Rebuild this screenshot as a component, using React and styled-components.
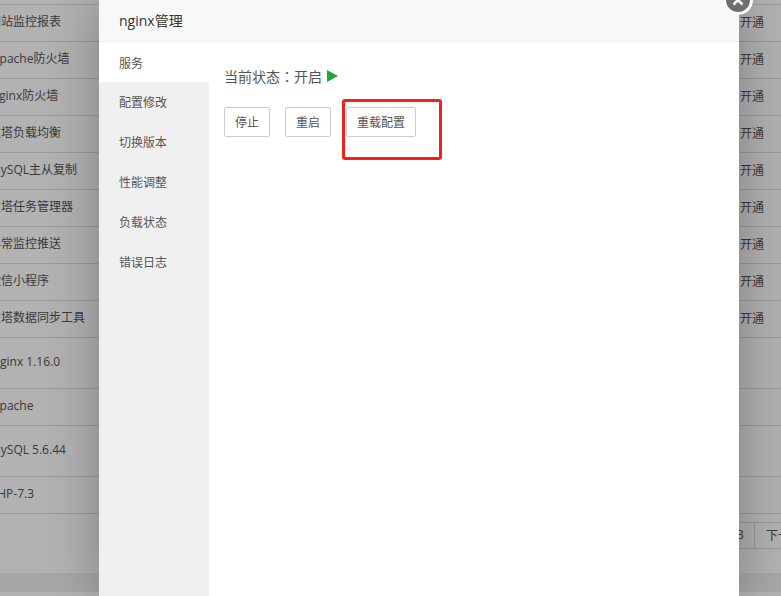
import React from "react";
import styled, { createGlobalStyle } from "styled-components";

const Global = createGlobalStyle`
  html, body { margin: 0; padding: 0; height: 100%; overflow: hidden; }
  body { font-family: "Open Sans", "Noto Sans CJK SC", sans-serif; font-size: 12px; color: #555; }
`;

const Page = styled.div`
  position: relative;
  width: 781px;
  height: 596px;
  overflow: hidden;
  background: #fff;
`;

const Table = styled.div`
  display: flex;
  flex-direction: column;
  padding-top: 4px;
`;

const Row = styled.div`
  display: flex;
  align-items: center;
  justify-content: space-between;
  height: ${(p) => p.$h}px;
  border-top: 1px solid #ddd;
  box-sizing: border-box;
  padding: 0 17px 4px 0;
  color: #555;
  font-size: 12px;
`;

const RowName = styled.span`
  margin-left: ${(p) => p.$shift}px;
  white-space: nowrap;
`;

const Action = styled.span`
  color: #555;
  padding-top: 2px;
`;

const TableEnd = styled.div`
  border-top: 1px solid #ddd;
`;

const Pager = styled.div`
  display: flex;
  justify-content: flex-end;
  height: 27px;
  margin: 8px -32px 0 0;
  font-size: 12px;
`;

const PageCell = styled.span`
  display: flex;
  align-items: center;
  padding: 0 ${(p) => p.$pad}px 2px;
  border: 1px solid #ddd;
  border-width: 1px 0 1px ${(p) => (p.$line ? "1px" : "0")};
  white-space: nowrap;
`;

const Footer = styled.div`
  height: 19px;
  margin-top: 24px;
  background: #efefef;
`;

const Shade = styled.div`
  position: absolute;
  inset: 0;
  background: #000;
  opacity: 0.3;
`;

const Modal = styled.div`
  position: absolute;
  left: 99px;
  top: 0;
  width: 640px;
  height: 596px;
  display: flex;
  flex-direction: column;
  background: #fff;
  box-shadow: 1px 1px 50px rgba(0, 0, 0, 0.3);
`;

const ModalTitle = styled.div`
  height: 39px;
  flex: none;
  display: flex;
  align-items: center;
  padding: 0 0 2px 20px;
  background: #f8f8f8;
  border-bottom: 1px solid #eee;
  color: #333;
  font-size: 14px;
`;

const ModalBody = styled.div`
  flex: 1;
  display: flex;
  min-height: 0;
`;

const Side = styled.nav`
  width: 110px;
  flex: none;
  background: #f0f0f0;
  display: flex;
  flex-direction: column;
`;

const Tab = styled.div`
  height: 40px;
  box-sizing: border-box;
  display: flex;
  align-items: center;
  padding: ${(p) => (p.$active ? "2px" : "0")} 0 0 20px;
  font-size: 12px;
  color: #555;
  background: ${(p) => (p.$active ? "#fff" : "transparent")};
`;

const Content = styled.div`
  flex: 1;
  padding: 24px 15px 0;
  background: #fff;
`;

const Status = styled.div`
  display: flex;
  align-items: center;
  height: 20px;
  font-size: 14px;
  color: #555;
`;

const Colon = styled.span`
  font-family: "Noto Sans CJK TC", sans-serif;
`;

const Play = styled.svg`
  width: 11px;
  height: 12px;
  margin-left: 5px;
  display: block;
`;

const Buttons = styled.div`
  display: flex;
  gap: 15px;
  margin-top: 21px;
`;

const Btn = styled.button`
  height: 30px;
  padding: 0 10px;
  border: 1px solid #ccc;
  border-radius: 2px;
  background: #fff;
  color: #555;
  font: inherit;
  font-size: 12px;
`;

const Callout = styled.div`
  position: absolute;
  left: 342px;
  top: 99px;
  width: 100px;
  height: 61px;
  box-sizing: border-box;
  border: 3px solid #f5201a;
  border-radius: 3px;
`;

const Close = styled.div`
  position: absolute;
  left: 723px;
  top: -15px;
  width: 30px;
  height: 30px;
  box-sizing: border-box;
  border: 3px solid #fff;
  border-radius: 50%;
  background: #6e6e6e;
  display: flex;
  align-items: center;
  justify-content: center;
`;

const rows = [
  ["网站监控报表", -11, 37],
  ["Apache防火墙", -8, 37],
  ["Nginx防火墙", -10, 37],
  ["宝塔负载均衡", -11, 37],
  ["MySQL主从复制", -10, 37],
  ["宝塔任务管理器", -11, 37],
  ["异常监控推送", -11, 37],
  ["微信小程序", -11, 37],
  ["宝塔数据同步工具", -11, 37],
  ["Nginx 1.16.0", -9, 51, true],
  ["Apache", -8, 37, true],
  ["MySQL 5.6.44", -10, 51, true],
  ["PHP-7.3", -10, 37, true],
];

const tabs = ["服务", "配置修改", "切换版本", "性能调整", "负载状态", "错误日志"];

export default function App() {
  return (
    <Page>
      <Global />
      <Table>
        {rows.map(([name, shift, h, noAction]) => (
          <Row key={name} $h={h}>
            <RowName $shift={shift}>{name}</RowName>
            {!noAction && <Action>开通</Action>}
          </Row>
        ))}
        <TableEnd />
        <Pager>
          <PageCell $pad={10}>3</PageCell>
          <PageCell $pad={11} $line>下一页</PageCell>
        </Pager>
        <Footer />
      </Table>
      <Shade />
      <Modal>
        <ModalTitle>nginx管理</ModalTitle>
        <ModalBody>
          <Side>
            {tabs.map((t, i) => (
              <Tab key={t} $active={i === 0}>{t}</Tab>
            ))}
          </Side>
          <Content>
            <Status>
              当前状态<Colon>：</Colon>开启
              <Play viewBox="0 0 11 12"><path d="M0 0 L11 6 L0 12 Z" fill="#20a53a" /></Play>
            </Status>
            <Buttons>
              <Btn>停止</Btn>
              <Btn>重启</Btn>
              <Btn>重载配置</Btn>
            </Buttons>
          </Content>
        </ModalBody>
      </Modal>
      <Callout />
      <Close>
        <svg width="14" height="14" viewBox="0 0 14 14">
          <path d="M2.5 2.5 L11.5 11.5 M11.5 2.5 L2.5 11.5" stroke="#fff" strokeWidth="2.6" />
        </svg>
      </Close>
    </Page>
  );
}
